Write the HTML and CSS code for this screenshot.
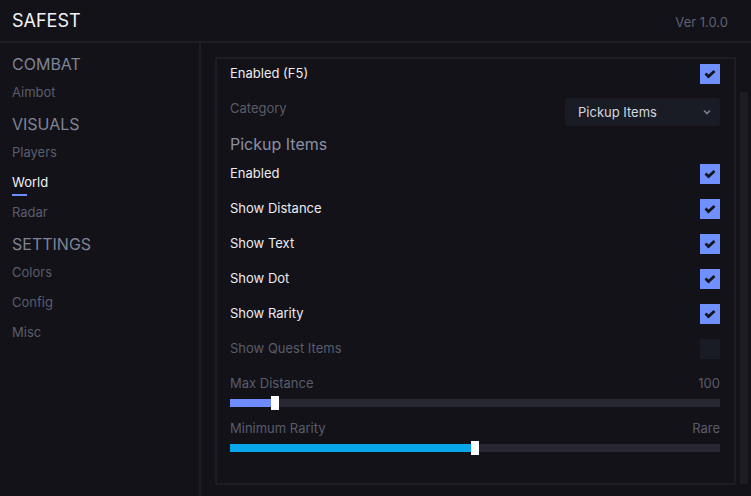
FILE: index.html
```html
<!DOCTYPE html>
<html lang="en">
<head>
    <meta charset="UTF-8">
    <title>SAFEST</title>
    <link rel="stylesheet" href="styles.css">
</head>
<body>
    <div class="app">
        <div class="header">
            <div class="title">SAFEST</div>
            <div class="version">Ver 1.0.0</div>
        </div>
        <div class="main">
            <div class="sidebar">
                <div class="group first">COMBAT</div>
                <div class="nav-item first">Aimbot</div>
                <div class="group">VISUALS</div>
                <div class="nav-item first">Players</div>
                <div class="nav-item active">World</div>
                <div class="nav-item after-active">Radar</div>
                <div class="group">SETTINGS</div>
                <div class="nav-item first">Colors</div>
                <div class="nav-item">Config</div>
                <div class="nav-item">Misc</div>
            </div>
            <div class="content">
                <div class="panel">
                    <div class="row">
                        <span class="label">Enabled (F5)</span>
                        <span class="checkbox checked"><svg viewBox="0 0 20 20"><path d="M5.5 9.5 L8.5 12.5 L14.5 7"/></svg></span>
                    </div>
                    <div class="row category">
                        <span class="label muted">Category</span>
                        <div class="select">
                            <span>Pickup Items</span>
                            <svg class="chevron" viewBox="0 0 8 6"><path d="M1 1.5 L4 4.5 L7 1.5"/></svg>
                        </div>
                    </div>
                    <div class="section-title">Pickup Items</div>
                    <div class="row">
                        <span class="label">Enabled</span>
                        <span class="checkbox checked"><svg viewBox="0 0 20 20"><path d="M5.5 9.5 L8.5 12.5 L14.5 7"/></svg></span>
                    </div>
                    <div class="row">
                        <span class="label">Show Distance</span>
                        <span class="checkbox checked"><svg viewBox="0 0 20 20"><path d="M5.5 9.5 L8.5 12.5 L14.5 7"/></svg></span>
                    </div>
                    <div class="row">
                        <span class="label">Show Text</span>
                        <span class="checkbox checked"><svg viewBox="0 0 20 20"><path d="M5.5 9.5 L8.5 12.5 L14.5 7"/></svg></span>
                    </div>
                    <div class="row">
                        <span class="label">Show Dot</span>
                        <span class="checkbox checked"><svg viewBox="0 0 20 20"><path d="M5.5 9.5 L8.5 12.5 L14.5 7"/></svg></span>
                    </div>
                    <div class="row">
                        <span class="label">Show Rarity</span>
                        <span class="checkbox checked"><svg viewBox="0 0 20 20"><path d="M5.5 9.5 L8.5 12.5 L14.5 7"/></svg></span>
                    </div>
                    <div class="row">
                        <span class="label muted">Show Quest Items</span>
                        <span class="checkbox"></span>
                    </div>
                    <div class="slider-head first">
                        <span>Max Distance</span>
                        <span>100</span>
                    </div>
                    <div class="track">
                        <div class="fill distance" style="width: 45px;"><span class="handle"></span></div>
                    </div>
                    <div class="slider-head">
                        <span>Minimum Rarity</span>
                        <span>Rare</span>
                    </div>
                    <div class="track">
                        <div class="fill rarity" style="width: 245px;"><span class="handle"></span></div>
                    </div>
                </div>
                <div class="scrollbar"></div>
            </div>
        </div>
    </div>
</body>
</html>
```

FILE: styles.css
```css
body {
    margin: 0;
    background-color: #121218;
    font-family: Inter, "Noto Sans", sans-serif;
    color: #e9e9ef;
}
.app {
    width: 751px;
    height: 496px;
    overflow: hidden;
}
.header {
    height: 41px;
    border-bottom: 2px solid #1c1d25;
    display: flex;
    align-items: center;
    justify-content: space-between;
    padding: 0 23px 0 12px;
}
.title {
    font-size: 18px;
    color: #f2f2f5;
}
.version {
    font-size: 13px;
    color: #5e6172;
    margin-top: 2px;
}
.main {
    display: flex;
    height: 453px;
}
.sidebar {
    width: 201px;
    border-right: 2px solid #1c1d25;
    padding: 11px 0 0 12px;
    box-sizing: border-box;
}
.group {
    font-size: 16px;
    line-height: 20px;
    color: #7f8396;
    margin-top: 12px;
}
.group.first {
    margin-top: 0;
}
.nav-item {
    font-size: 13px;
    line-height: 20px;
    color: #5a5d6d;
    margin-top: 10px;
}
.nav-item.first {
    margin-top: 8px;
}
.nav-item.active {
    color: #f2f2f5;
}
.nav-item.active::after {
    content: '';
    display: block;
    width: 15px;
    height: 2px;
    margin-top: 2px;
    background-color: #6f8cff;
}
.nav-item.after-active {
    margin-top: 6px;
}
.content {
    flex: 1;
    display: flex;
    padding: 14px 0 0 14px;
}
.panel {
    width: 521px;
    height: 428px;
    box-sizing: border-box;
    border: 2px solid #1c1d25;
    border-radius: 2px;
    padding: 4px 14px 0 13px;
}
.scrollbar {
    width: 8px;
    height: 392px;
    margin: 35px 0 0 4px;
    background-color: #1b1c24;
}
.row {
    display: flex;
    justify-content: space-between;
    align-items: center;
    height: 20px;
    margin-bottom: 15px;
}
.label {
    font-size: 13px;
    line-height: 20px;
    color: #ececf1;
}
.label.muted {
    color: #5a5c6b;
}
.row.category {
    height: 28px;
    align-items: flex-start;
    margin-bottom: 8px;
}
.select {
    width: 155px;
    height: 28px;
    box-sizing: border-box;
    background-color: #1a1c25;
    border-radius: 3px;
    display: flex;
    align-items: center;
    justify-content: space-between;
    padding: 0 9px 0 13px;
    font-size: 13px;
    color: #d6d7de;
}
.chevron {
    width: 8px;
    height: 6px;
    fill: none;
    stroke: #7c7f8e;
    stroke-width: 1.6;
}
.section-title {
    font-size: 16px;
    line-height: 20px;
    color: #8c8fa2;
    margin-bottom: 9px;
}
.checkbox {
    width: 20px;
    height: 20px;
    background-color: #1a1c25;
    display: block;
    margin-top: 2px;
}
.checkbox.checked {
    background-color: #7090ff;
}
.checkbox svg {
    width: 20px;
    height: 20px;
    display: block;
    fill: none;
    stroke: #14151c;
    stroke-width: 2.8;
}
.slider-head {
    display: flex;
    justify-content: space-between;
    font-size: 13px;
    line-height: 20px;
    color: #5a5c6b;
    margin-top: 11px;
}
.slider-head.first {
    margin-top: 0;
}
.track {
    height: 8px;
    margin-top: 6px;
    background-color: #272831;
}
.fill {
    position: relative;
    height: 8px;
}
.fill.distance {
    background-color: #6f8cff;
}
.fill.rarity {
    background-color: #07a5ea;
}
.handle {
    position: absolute;
    right: -4px;
    top: -3px;
    width: 8px;
    height: 14px;
    background-color: #ffffff;
}
```
